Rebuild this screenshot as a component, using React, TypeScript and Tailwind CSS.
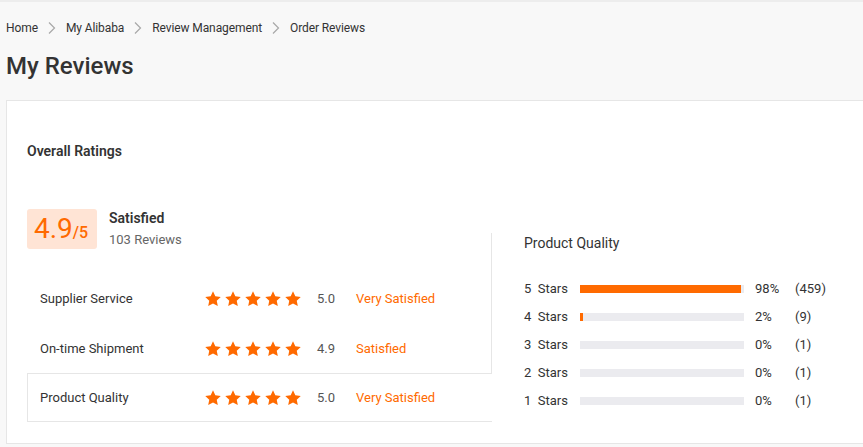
import React from "react";

const ORANGE = "#ff6a00";

const crumbs = ["Home", "My Alibaba", "Review Management", "Order Reviews"];

const ratings = [
    { label: "Supplier Service", score: "5.0", text: "Very Satisfied", active: false },
    { label: "On-time Shipment", score: "4.9", text: "Satisfied", active: false },
    { label: "Product Quality", score: "5.0", text: "Very Satisfied", active: true },
];

const bars = [
    { stars: 5, pct: 98, count: 459 },
    { stars: 4, pct: 2, count: 9 },
    { stars: 3, pct: 0, count: 1 },
    { stars: 2, pct: 0, count: 1 },
    { stars: 1, pct: 0, count: 1 },
];

const Chevron = () => (
    <svg width="10" height="14" viewBox="0 0 10 14" className="mx-[9px]">
        <path d="M2 1.5 L7.5 7 L2 12.5" fill="none" stroke="#a8a8a8" strokeWidth="1.2" />
    </svg>
);

const Star = () => (
    <svg width="18" height="18" viewBox="0 0 24 24">
        <path
            d="M12 1.8l3.1 6.6 7.2.9-5.3 5 1.4 7.1L12 17.9l-6.4 3.5 1.4-7.1-5.3-5 7.2-.9z"
            fill={ORANGE}
        />
    </svg>
);

const App = () => {
    return (
        <div
            className="min-h-screen bg-[#f8f8f8] border-t-2 border-[#ededed] text-[#333]"
            style={{ fontFamily: "Roboto, 'Liberation Sans', sans-serif" }}
        >
            <div className="flex items-center h-[49px] pl-[6px] pt-[2px] text-[12px] text-[#333] tracking-[-0.1px]">
                {crumbs.map((c, i) => (
                    <React.Fragment key={c}>
                        {i > 0 && <Chevron />}
                        <span>{c}</span>
                    </React.Fragment>
                ))}
            </div>
            <h1 className="pl-[6px] text-[24px] leading-[30px] font-medium text-[#333] h-[49px]">My Reviews</h1>

            <div className="ml-[6px] bg-white border border-r-0 border-[#e6e6e6] pl-[20px] pt-[41px] h-[344px]">
                <h2 className="text-[14px] leading-[18px] font-semibold text-[#333]">Overall Ratings</h2>

                <div className="flex mt-[49px]">
                    <div className="w-[464px] shrink-0">
                        <div className="flex items-start">
                            <div className="flex items-baseline h-[40px] w-[70px] rounded-[3px] bg-[#ffe4d5] pl-[7px] pt-[1px]" style={{ color: ORANGE }}>
                                <span className="text-[28px] leading-[37px]">4.9</span>
                                <span className="text-[16px] font-medium">/5</span>
                            </div>
                            <div className="ml-[12px]">
                                <div className="text-[14px] leading-[18px] font-semibold text-[#333]">Satisfied</div>
                                <div className="text-[13px] leading-[18px] mt-[4px] text-[#666]">103 Reviews</div>
                            </div>
                        </div>

                        <div className="mt-[24px]">
                            {ratings.map((r) => (
                                <div
                                    key={r.label}
                                    className={
                                        r.active
                                            ? "relative z-10 -mr-px flex items-center h-[49px] pl-[12px] pt-[1px] bg-white border border-r-0 border-[#e6e6e6] text-[13px]"
                                            : "flex items-center h-[50px] pl-[13px] pt-[1px] text-[13px]"
                                    }
                                >
                                    <span className="w-[164px] text-[#333]">{r.label}</span>
                                    <span className="flex gap-[2px] w-[113px]">
                                        {[0, 1, 2, 3, 4].map((i) => (
                                            <Star key={i} />
                                        ))}
                                    </span>
                                    <span className="w-[39px] text-[#555]">{r.score}</span>
                                    <span style={{ color: ORANGE }}>{r.text}</span>
                                </div>
                            ))}
                        </div>
                    </div>

                    <div className="mt-[24px] h-[188px] flex-1 border-l border-[#e6e6e6] pl-[32px]">
                        <div className="text-[14px] leading-[20px] text-[#333]">Product Quality</div>
                        <div className="mt-[22px]">
                            {bars.map((b) => (
                                <div key={b.stars} className="flex items-center h-[28px] text-[13px] text-[#333]">
                                    <span className="w-[56px]">
                                        {b.stars}&nbsp; Stars
                                    </span>
                                    <div className="w-[164px] h-[8px] bg-[#ebebef]">
                                        <div className="h-full" style={{ width: `${b.pct}%`, background: ORANGE }} />
                                    </div>
                                    <span className="ml-[11px] w-[40px]">{b.pct}%</span>
                                    <span>({b.count})</span>
                                </div>
                            ))}
                        </div>
                    </div>
                </div>
            </div>
        </div>
    );
};

export default App;
